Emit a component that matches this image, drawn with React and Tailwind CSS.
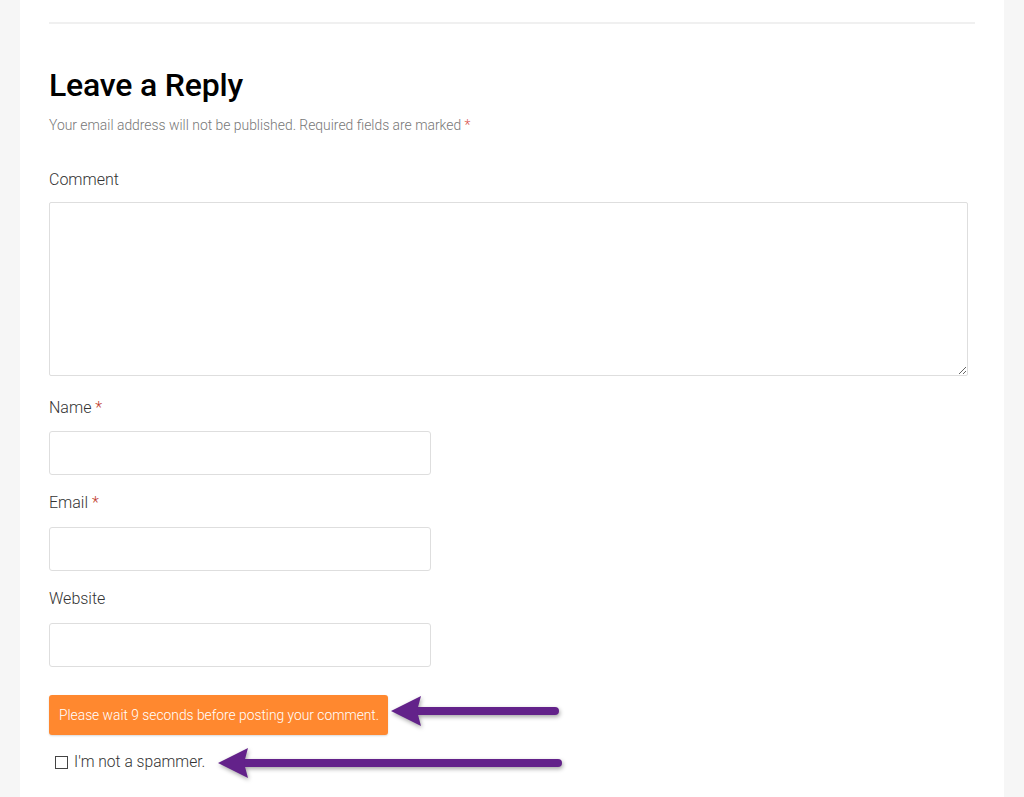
import React from 'react';

const Arrow = ({ tipX, y, endX }) => {
  const headLen = 30;
  return (
    <svg
      className="absolute left-0 top-0 pointer-events-none"
      width="1024"
      height="797"
      style={{ filter: 'drop-shadow(1px 2px 2px rgba(0,0,0,0.35))' }}
    >
      <line x1={tipX + headLen - 4} y1={y} x2={endX} y2={y} stroke="#63228a" strokeWidth="8" strokeLinecap="round" />
      <polygon points={`${tipX},${y} ${tipX + headLen},${y - 15} ${tipX + headLen - 4},${y} ${tipX + headLen},${y + 15}`} fill="#63228a" />
    </svg>
  );
};

const Label = ({ children, required }) => (
  <label className="block text-[16px] font-light text-[#333]">
    {children}
    {required && <span className="text-[#c0392b]"> *</span>}
  </label>
);

const App = () => {
  return (
    <div className="relative min-h-[797px] bg-[#f6f6f6] px-[20px]" style={{ fontFamily: 'Roboto, "Liberation Sans", sans-serif' }}>
      <div className="bg-white h-[797px] px-[29px] overflow-hidden">
        <div className="h-[22px]" />
        <div className="h-[2px] bg-[#f0f0f0]" />
        <h3 className="mt-[43px] text-[32px] leading-[36px] font-medium text-black tracking-[-0.2px]">Leave a Reply</h3>
        <p className="mt-[12px] text-[13.9px] leading-[20px] font-light text-[#777]">
          Your email address will not be published. Required fields are marked <span className="text-[#d9534f]">*</span>
        </p>
        <div className="mt-[33px] mr-[7px]">
          <Label>Comment</Label>
          <textarea className="block mt-[10px] w-full h-[174px] border border-[#dedede] rounded-[2px] bg-white resize-y" />
        </div>
        <div className="mt-[20px]">
          <Label required>Name</Label>
          <input type="text" className="block mt-[11px] w-[382px] h-[44px] border border-[#dedede] rounded-[3px]" />
        </div>
        <div className="mt-[16px]">
          <Label required>Email</Label>
          <input type="text" className="block mt-[12px] w-[382px] h-[44px] border border-[#dedede] rounded-[3px]" />
        </div>
        <div className="mt-[16px]">
          <Label>Website</Label>
          <input type="text" className="block mt-[12px] w-[382px] h-[44px] border border-[#dedede] rounded-[3px]" />
        </div>
        <div className="mt-[28px] w-[339px] h-[40px] flex items-center px-[10px] bg-[#ff882f] rounded-[3px] text-white text-[13.8px] font-light whitespace-nowrap shadow-[0_1px_2px_rgba(0,0,0,0.15)]">
          Please wait 9 seconds before posting your comment.
        </div>
        <div className="mt-[16px] ml-[6px] flex items-center gap-[6px] text-[15.6px] font-light text-[#333]">
          <span className="inline-block w-[13px] h-[13px] border border-[#444] bg-white" />
          <span>I'm not a spammer.</span>
        </div>
      </div>
      <Arrow tipX={391} y={711} endX={555} />
      <Arrow tipX={218} y={763} endX={558} />
    </div>
  );
};

export default App;
